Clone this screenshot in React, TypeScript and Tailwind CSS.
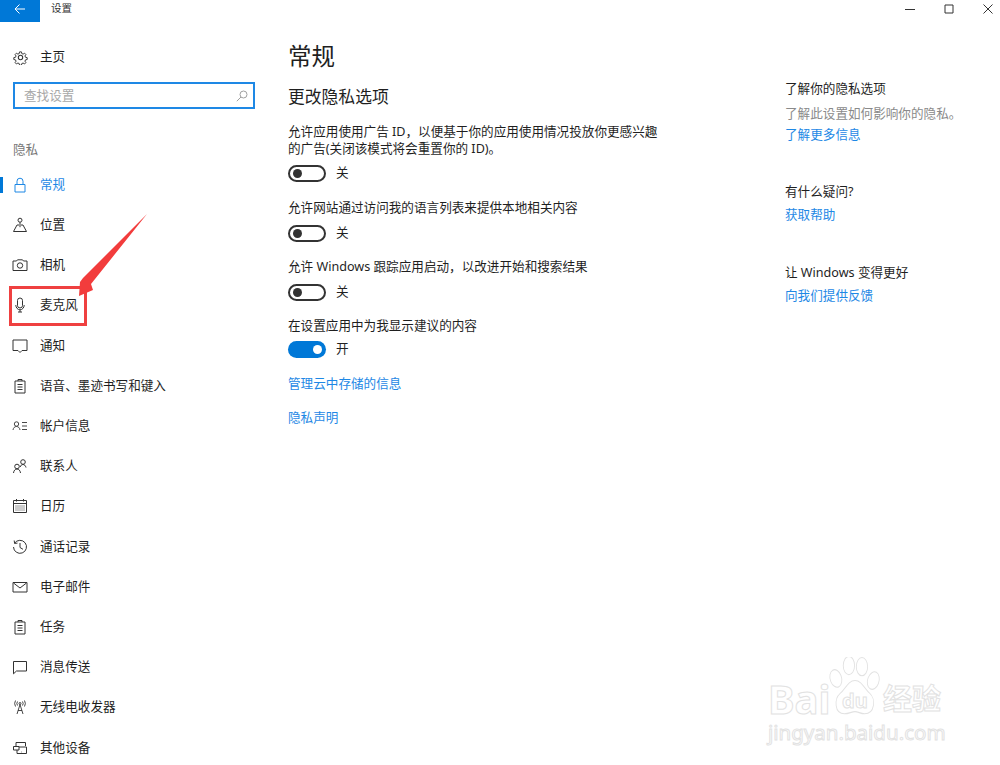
import type { ReactNode } from "react";

const svgProps = {
  viewBox: "0 0 16 16",
  fill: "none",
  stroke: "currentColor",
  strokeWidth: 1,
  className: "h-4 w-4 shrink-0",
};

const icons: Record<string, ReactNode> = {
  lock: (
    <svg {...svgProps}>
      <path d="M3 7.500h10v7.500H3zM5 7.500V4.200a3 3 0 0 1 6 0v3.300" />
    </svg>
  ),
  location: (
    <svg {...svgProps}>
      <circle cx="8" cy="3.200" r="2" />
      <path d="M8 5.200v5M5 8 1.500 14.500h13L11 8H9M5 8h2" />
    </svg>
  ),
  camera: (
    <svg {...svgProps}>
      <path d="M1 4h3.500l1-1.200h5l1 1.200H15v9.500H1z" />
      <circle cx="8" cy="8.500" r="2.700" />
    </svg>
  ),
  mic: (
    <svg {...svgProps}>
      <rect x="5.500" y="1" width="5" height="10" rx="2.500" />
      <path d="M3.800 8a4.200 4.800 0 0 0 8.400 0M8 13v2M6 15h4" />
    </svg>
  ),
  notify: (
    <svg {...svgProps}>
      <path d="M1 2h14v10.500h-5L8 14.500l-2-2H1z" />
    </svg>
  ),
  clipboard: (
    <svg {...svgProps}>
      <path d="M3 3h10v12H3zM6 3V1.500h4V3M5.500 6.500h5M5.500 9h5M5.500 11.500h5" />
    </svg>
  ),
  account: (
    <svg {...svgProps} strokeWidth={0.9}>
      <circle cx="4.500" cy="6" r="2.200" />
      <path d="M1 12c.3-2.200 1.700-3.500 3.500-3.500S7.700 9.800 8 12M10 4.500h5M10 8h5M10 11.500h5" />
    </svg>
  ),
  contacts: (
    <svg {...svgProps}>
      <circle cx="11" cy="4" r="2.300" />
      <path d="M8.200 9c.5-1.600 1.500-2.500 2.800-2.500s2.500 1 3 3" />
      <circle cx="5" cy="8.500" r="2.300" />
      <path d="M1.500 15c.3-2.500 1.700-4 3.500-4s3.200 1.500 3.500 4" />
    </svg>
  ),
  calendar: (
    <svg {...svgProps}>
      <path d="M1.500 2.500h13v12h-13zM1.500 5.500h13" />
      <path d="M4.500 1v2.500M11.500 1v2.500" />
      <path strokeDasharray="1 1" d="M3.500 8h9M3.500 10h9M3.500 12h9" />
    </svg>
  ),
  history: (
    <svg {...svgProps}>
      <path d="M2.600 4.200A6.500 6.500 0 1 1 1.500 8M2.200 1.500l.4 2.900 2.900-.3M8 4v4.500l3 1.800" />
    </svg>
  ),
  mail: (
    <svg {...svgProps}>
      <path d="M1 3.500h14v9.500H1zM1.500 4 8 9l6.500-5" />
    </svg>
  ),
  message: (
    <svg {...svgProps}>
      <path d="M1.500 2.500h13v9.500h-10l-3 2.800z" />
    </svg>
  ),
  radio: (
    <svg {...svgProps} strokeWidth={0.9}>
      <circle cx="8" cy="4.500" r="1" />
      <path d="M8 5.500 5 15M8 5.500l3 9.500M6 11.500h4M5.500 2.500a3.500 3.500 0 0 0 0 4M10.500 2.500a3.500 3.500 0 0 1 0 4M3.500 1.500a6 6 0 0 0 0 6M12.500 1.500a6 6 0 0 1 0 6" />
    </svg>
  ),
  devices: (
    <svg {...svgProps}>
      <path d="M4 6V2.500h9.500V6M1.500 6.500H7v3.500H1.500zM7 7h7.500v6.500H5V10M9.500 12h.5" />
    </svg>
  ),
};

const navItems = [
  { label: "常规", icon: "lock", active: true },
  { label: "位置", icon: "location" },
  { label: "相机", icon: "camera" },
  { label: "麦克风", icon: "mic" },
  { label: "通知", icon: "notify" },
  { label: "语音、墨迹书写和键入", icon: "clipboard" },
  { label: "帐户信息", icon: "account" },
  { label: "联系人", icon: "contacts" },
  { label: "日历", icon: "calendar" },
  { label: "通话记录", icon: "history" },
  { label: "电子邮件", icon: "mail" },
  { label: "任务", icon: "clipboard" },
  { label: "消息传送", icon: "message" },
  { label: "无线电收发器", icon: "radio" },
  { label: "其他设备", icon: "devices" },
];

function Toggle({ on, label }: { on?: boolean; label: string }) {
  return (
    <div className="flex h-[18px] items-center gap-[10px]">
      <div
        className={
          on
            ? "flex h-[17px] w-[38px] items-center justify-end rounded-full bg-[#0078d7] px-[4px]"
            : "flex h-[17px] w-[38px] items-center rounded-full border-2 border-[#333333] px-[3px]"
        }
      >
        <div className={on ? "h-[9px] w-[9px] rounded-full bg-white" : "h-[9px] w-[9px] rounded-full bg-[#333333]"} />
      </div>
      <span className="text-[12.6px] leading-[18px] text-[#222222]">{label}</span>
    </div>
  );
}

function Watermark() {
  const outline = "text-white [-webkit-text-stroke:1px_#e2e2e2]";
  return (
    <div className="pointer-events-none absolute left-[766px] top-[655px] h-[90px] w-[185px]">
      <span className={`absolute left-[2px] top-[27px] text-[40px] font-bold leading-[34px] ${outline}`}>Bai</span>
      <svg
        className="absolute left-[62px] top-[2px] h-[60px] w-[54px]"
        viewBox="0 0 62 56"
        preserveAspectRatio="none"
        fill="white"
        stroke="#e2e2e2"
        strokeWidth="1"
      >
        <ellipse cx="9" cy="20" rx="6.500" ry="8.500" transform="rotate(-25 9 20)" />
        <ellipse cx="24" cy="8" rx="6.500" ry="8.500" />
        <ellipse cx="39" cy="9" rx="6.500" ry="8.500" />
        <ellipse cx="52" cy="22" rx="6.500" ry="8.500" transform="rotate(25 52 22)" />
        <path d="M31 22c8 0 11 8 17 12 7 5 6 19-6 19-5 0-7-2-11-2s-7 2-12 2c-12 0-12-14-5-19 6-4 9-12 17-12z" />
      </svg>
      <span className={`absolute left-[76px] top-[34px] text-[20px] font-bold leading-[24px] ${outline}`}>du</span>
      <span className={`absolute left-[117px] top-[28px] text-[29px] font-bold leading-[32px] ${outline}`}>经验</span>
      <span className={`absolute left-[2px] top-[64px] text-[20.5px] leading-[26px] ${outline}`}>jingyan.baidu.com</span>
    </div>
  );
}

function Annotation() {
  return (
    <>
      <div className="pointer-events-none absolute left-[9px] top-[286px] h-[40px] w-[78px] border-[3px] border-[#ef4040]" />
      <svg className="pointer-events-none absolute left-0 top-0 h-[330px] w-[160px]" viewBox="0 0 160 330">
        <polygon points="147,214 91,284 93,290 79,296 80,282 83,278" fill="#f23c3c" />
      </svg>
    </>
  );
}

export default function App() {
  return (
    <div className="relative flex h-[765px] w-[1000px] flex-col overflow-hidden bg-white font-['Noto_Sans','Noto_Sans_CJK_SC',sans-serif] text-[#1f1f1f]">
      {/* title bar */}
      <div className="flex h-[22px] shrink-0 items-start">
        <div className="flex h-[22px] w-[40px] items-center justify-center bg-[#0078d7] pb-[4px]">
          <svg className="h-[12px] w-[12px] text-white" viewBox="0 0 12 12" fill="none" stroke="currentColor" strokeWidth="1">
            <path d="M11 6H1M5.500 1.500 1 6l4.500 4.500" />
          </svg>
        </div>
        <span className="ml-[11px] text-[10.5px] leading-[16px] text-[#333333]">设置</span>
        <div className="ml-auto mr-[7px] mt-[4px] flex items-center gap-[29px] text-[#333333]">
          <svg className="h-[10px] w-[10px]" viewBox="0 0 10 10" stroke="currentColor" fill="none"><path d="M0 5.500h10" /></svg>
          <svg className="h-[10px] w-[10px]" viewBox="0 0 10 10" stroke="currentColor" fill="none"><path d="M1 1h8v8H1z" /></svg>
          <svg className="h-[10px] w-[10px]" viewBox="0 0 10 10" stroke="currentColor" fill="none"><path d="m.5.500 9 9M9.500.500l-9 9" /></svg>
        </div>
      </div>

      <div className="flex min-h-0 flex-1">
        {/* sidebar */}
        <aside className="w-[288px] shrink-0">
          <div className="mt-[25px] flex h-[20px] items-center pl-[13px]">
            <svg className="h-[15px] w-[15px] text-[#333333]" viewBox="0 0 24 24" fill="none" stroke="currentColor" strokeWidth="1.700">
              <circle cx="12" cy="12" r="3.500" />
              <path d="M10.300 2h3.400l.6 3 2.300 1 2.600-1.700 2.400 2.400-1.700 2.600 1 2.300 3 .6v3.400l-3 .6-1 2.300 1.700 2.600-2.400 2.400-2.600-1.700-2.300 1-.6 3h-3.400l-.6-3-2.300-1-2.600 1.700-2.400-2.400 1.700-2.600-1-2.300-3-.6v-3.400l3-.6 1-2.300-1.700-2.600 2.400-2.400 2.600 1.700 2.300-1z" transform="translate(1.200 1.200) scale(.9)" />
            </svg>
            <span className="ml-[12px] text-[12.6px] leading-[18px]">主页</span>
          </div>
          <div className="ml-[13px] mt-[15px] flex h-[27px] w-[242px] items-center justify-between border-2 border-[#1e88e5] pl-[9px] pr-[5px]">
            <span className="text-[12.6px] leading-[18px] text-[#a8a8a8]">查找设置</span>
            <svg className="h-[12px] w-[12px] text-[#a0a0a0]" viewBox="0 0 12 12" fill="none" stroke="currentColor">
              <circle cx="7.500" cy="4.500" r="3.500" />
              <path d="M5 7 .8 11.200" />
            </svg>
          </div>
          <div className="ml-[13px] mt-[32px] text-[12.6px] leading-[18px] text-[#777777]">隐私</div>
          <nav className="mt-[5.8px]">
            {navItems.map((item) => (
              <div key={item.label} className="relative flex h-[40.2px] items-center pl-[12px]">
                {item.active && <div className="absolute left-0 top-[12px] h-[16px] w-[3px] bg-[#0078d7]" />}
                <span className={item.active ? "text-[#1e88e5]" : "text-[#333333]"}>{icons[item.icon]}</span>
                <span className={item.active ? "ml-[12px] text-[12.6px] leading-[18px] text-[#1e88e5]" : "ml-[12px] text-[12.6px] leading-[18px]"}>
                  {item.label}
                </span>
              </div>
            ))}
          </nav>
        </aside>

        {/* main column */}
        <main className="w-[497px] shrink-0">
          <h1 className="mt-[17px] text-[23.5px] font-normal leading-[34px]">常规</h1>
          <h2 className="mt-[12px] text-[16.8px] font-normal leading-[24px]">更改隐私选项</h2>
          <p className="mt-[14px] w-[372px] text-[12.6px] leading-[17px]">
            允许应用使用广告 ID，以便基于你的应用使用情况投放你更感兴趣的广告(关闭该模式将会重置你的 ID)。
          </p>
          <div className="mt-[7px]"><Toggle label="关" /></div>
          <p className="mt-[17px] text-[12.6px] leading-[18px]">允许网站通过访问我的语言列表来提供本地相关内容</p>
          <div className="mt-[7px]"><Toggle label="关" /></div>
          <p className="mt-[16px] text-[12.6px] leading-[18px]">允许 Windows 跟踪应用启动，以改进开始和搜索结果</p>
          <div className="mt-[7px]"><Toggle label="关" /></div>
          <p className="mt-[16px] text-[12.6px] leading-[18px]">在设置应用中为我显示建议的内容</p>
          <div className="mt-[5px]"><Toggle on label="开" /></div>
          <p className="mt-[17px] text-[12.6px] leading-[18px] text-[#1e88e5]">管理云中存储的信息</p>
          <p className="mt-[16px] text-[12.6px] leading-[18px] text-[#1e88e5]">隐私声明</p>
        </main>

        {/* related links */}
        <section className="flex-1 pt-[58px] text-[12.6px] leading-[18px]">
          <p>了解你的隐私选项</p>
          <p className="mt-[7px] text-[#8a8a8a]">了解此设置如何影响你的隐私。</p>
          <p className="mt-[3px] text-[#1e88e5]">了解更多信息</p>
          <p className="mt-[39px]">有什么疑问?</p>
          <p className="mt-[5px] text-[#1e88e5]">获取帮助</p>
          <p className="mt-[40px]">让 Windows 变得更好</p>
          <p className="mt-[5px] text-[#1e88e5]">向我们提供反馈</p>
        </section>
      </div>

      <Watermark />
      <Annotation />
    </div>
  );
}
